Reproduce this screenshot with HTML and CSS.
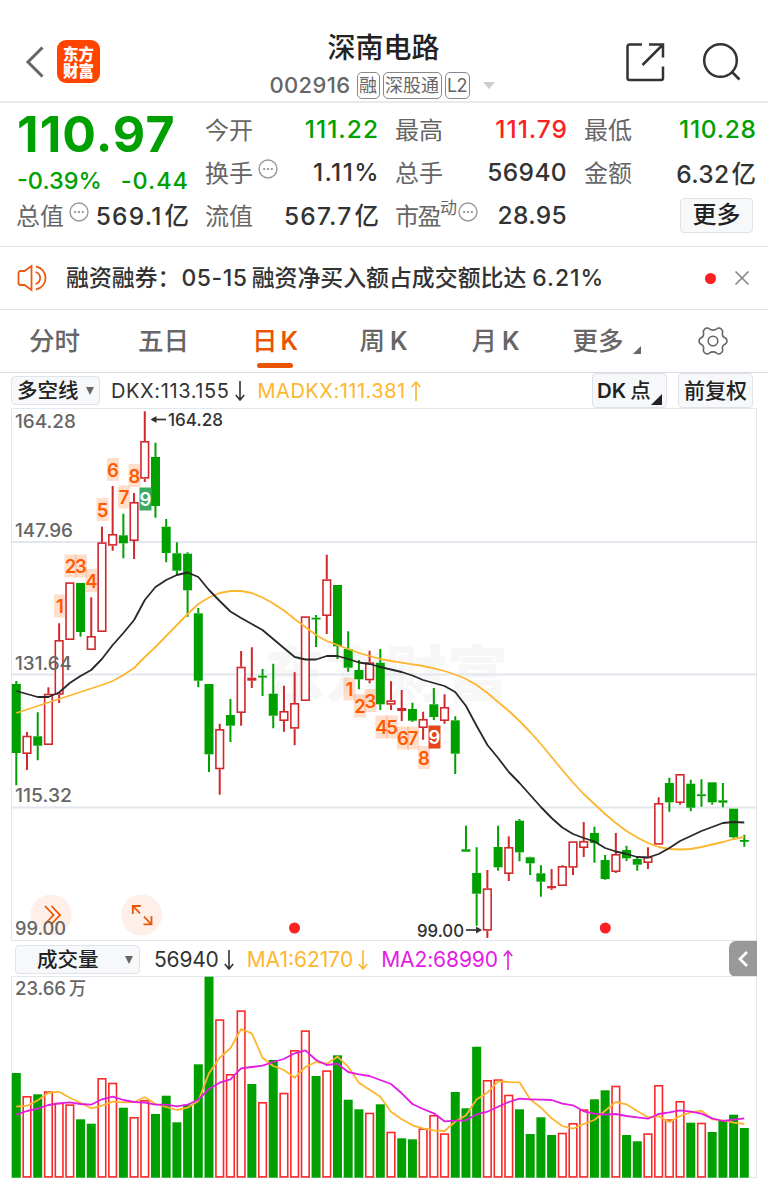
FILE: index.html
```html
<!DOCTYPE html>
<html lang="zh-CN">
<head>
<meta charset="utf-8">
<title>深南电路 002916</title>
<link rel="stylesheet" href="styles.css">
</head>
<body>
<header class="topbar">
  <div class="topbar-left">
    <svg class="back" width="22" height="34" viewBox="0 0 22 34"><path d="M19.500 2.500L5 17l14.500 14.500" fill="none" stroke="#666" stroke-width="3"/></svg>
    <div class="logo"><span>东方</span><span>财富</span></div>
  </div>
  <div class="title">
    <h1>深南电路</h1>
    <div class="subtitle"><span class="code">002916</span><span class="tag">融</span><span class="tag">深股通</span><span class="tag tag-l2">L2</span><i class="caret"></i></div>
  </div>
  <div class="topbar-right">
    <svg width="42" height="42" viewBox="0 0 42 42" fill="none" stroke="#333" stroke-width="2.500"><path d="M17 3.500H4.500a2 2 0 0 0-2 2V37a2 2 0 0 0 2 2H36a2 2 0 0 0 2-2V25.500M24 3.500H38V16.500M38 3.500L17.500 24"/></svg>
    <svg width="42" height="42" viewBox="0 0 42 42" fill="none" stroke="#333" stroke-width="2.500"><circle cx="19.500" cy="19.500" r="16.300"/><path d="M30.500 30.500L38.500 38.500"/></svg>
  </div>
</header>

<section class="quote">
  <div class="price-col">
    <div class="price">110.97</div>
    <div class="row change green"><span>-0.39%</span><span class="wide">-0.44</span></div>
    <div class="row"><label>总值<svg class="info" viewBox="0 0 20 20"><circle cx="10" cy="10" r="9"/><path d="M5.200 10h2M9 10h2M12.800 10h2"/></svg></label><b class="cap">569.1<em>亿</em></b></div>
  </div>
  <div class="cell-col">
    <div class="row"><label>今开</label><b class="green wide">111.22</b></div>
    <div class="row"><label>换手<svg class="info" viewBox="0 0 20 20"><circle cx="10" cy="10" r="9"/><path d="M5.200 10h2M9 10h2M12.800 10h2"/></svg></label><b class="wider">1.11%</b></div>
    <div class="row"><label>流值</label><b class="cap">567.7<em>亿</em></b></div>
  </div>
  <div class="cell-col">
    <div class="row"><label>最高</label><b class="red wide">111.79</b></div>
    <div class="row"><label>总手</label><b>56940</b></div>
    <div class="row"><label class="pe">市盈<sup>动</sup><svg class="info" viewBox="0 0 20 20"><circle cx="10" cy="10" r="9"/><path d="M5.200 10h2M9 10h2M12.800 10h2"/></svg></label><b>28.95</b></div>
  </div>
  <div class="cell-col">
    <div class="row"><label>最低</label><b class="green mid">110.28</b></div>
    <div class="row"><label>金额</label><b>6.32<em>亿</em></b></div>
    <div class="row row-end"><button class="more">更多</button></div>
  </div>
</section>

<section class="notice">
  <svg class="speaker" width="32" height="28" viewBox="0 0 32 28" fill="none" stroke="#eb5a14" stroke-width="1.800"><path d="M14.500 2L7.500 7H3.500a2 2 0 0 0-2 2v10a2 2 0 0 0 2 2h4l7 5z"/><path d="M18.500 8a6.200 6.200 0 0 1 0 12M19 2.500a11.700 11.700 0 0 1 0 23"/></svg>
  <p>融资融券：<span class="n1">05-15</span>融资净买入额占成交额比达<span class="n2">6.21%</span></p>
  <i class="dot"></i>
  <svg class="close" width="16" height="16" viewBox="0 0 16 16"><path d="M1.500 1.500l13 13M14.500 1.500l-13 13" stroke="#888" stroke-width="1.700"/></svg>
</section>

<nav class="tabs">
  <span class="tab">分时</span>
  <span class="tab">五日</span>
  <span class="tab active">日<i>K</i></span>
  <span class="tab">周<i>K</i></span>
  <span class="tab">月<i>K</i></span>
  <span class="tab tab-more">更多<svg width="8" height="8"><path d="M8 0v8H0z" fill="#666"/></svg></span>
  <svg class="gear" width="30" height="30" viewBox="-15 -15 30 30" fill="none" stroke="#666" stroke-width="1.600"><path d="M-6.500 -12.900Q-4.800 -13.200 -3.800 -12.200Q0 -9.600 3.800 -12.200Q4.800 -13.200 6.500 -12.900Q8.800 -12 9.500 -10.300Q9.900 -9.300 9.400 -8Q9 -4.200 12.400 -3Q14 -2 14 0Q14 2 12.400 3Q9 4.200 9.400 8Q9.900 9.300 9.500 10.300Q8.800 12 6.500 12.900Q4.800 13.200 3.800 12.200Q0 9.600 -3.800 12.200Q-4.800 13.200 -6.500 12.900Q-8.800 12 -9.500 10.300Q-9.900 9.300 -9.400 8Q-9 4.200 -12.400 3Q-14 2 -14 0Q-14 -2 -12.400 -3Q-9 -4.200 -9.400 -8Q-9.900 -9.300 -9.500 -10.300Q-8.800 -12 -6.500 -12.900Z"/><circle r="4.800"/></svg>
</nav>

<section class="indicator">
  <button class="chip chip-main">多空线<i class="tri"></i></button>
  <span class="dkx">DKX:113.155</span>
  <svg class="arr" width="10" height="20" viewBox="0 0 10 20"><path d="M5 0v19M.8 14L5 19l4.200-5" stroke="#333"/></svg>
  <span class="madkx">MADKX:111.381</span>
  <svg class="arr" width="10" height="20" viewBox="0 0 10 20"><path d="M5 20V1M.8 6L5 1l4.200 5" stroke="#fdb62f"/></svg>
  <button class="chip chip-dk"><span>DK</span>点<svg width="11" height="11"><path d="M11 0v11H0z" fill="#222"/></svg></button>
  <button class="chip chip-adj">前复权</button>
</section>

<svg id="kline" class="chart" width="768" height="533" viewBox="0 408 768 533"></svg>

<section class="volhead">
  <button class="chip chip-vol">成交量<i class="tri"></i></button>
  <span class="v0">56940</span>
  <svg class="arr" width="10" height="20" viewBox="0 0 10 20"><path d="M5 0v19M.8 14L5 19l4.200-5" stroke="#333"/></svg>
  <span class="v1">MA1:62170</span>
  <svg class="arr" width="10" height="20" viewBox="0 0 10 20"><path d="M5 0v19M.8 14L5 19l4.200-5" stroke="#fdb62f"/></svg>
  <span class="v2">MA2:68990</span>
  <svg class="arr" width="10" height="20" viewBox="0 0 10 20"><path d="M5 20V1M.8 6L5 1l4.200 5" stroke="#e31be3"/></svg>
  <button class="collapse"><svg width="12" height="18" viewBox="0 0 12 18"><path d="M10 2L3 9l7 7" fill="none" stroke="#fff" stroke-width="2.800"/></svg></button>
</section>

<svg id="volume" class="chart" width="768" height="207" viewBox="0 976 768 207"></svg>
<script src="chart.js"></script>
</body>
</html>
```
FILE: styles.css
```css
* { box-sizing: border-box; }
body { margin: 0; width: 768px; height: 1183px; overflow: hidden; background: #fff; color: #333; font-family: Inter, "Noto Sans CJK SC", sans-serif; }
button { font-family: inherit; margin: 0; padding: 0; border: 1px solid #dfe3e9; background: #f6f8fa; color: #222; border-radius: 4px; }
i, em { font-style: normal; }
svg { display: block; flex: none; }
.green { color: #00a000 !important; }
.red { color: #fb2021 !important; }

.topbar { height: 103px; border-bottom: 2px solid #ebebeb; display: grid; grid-template-columns: 200px 368px 200px; }
.topbar-left { display: flex; align-items: center; padding: 22px 0 0 23px; gap: 12px; }
.logo { width: 43px; height: 43px; border-radius: 9px; background: #ff4400; color: #fff; display: flex; flex-direction: column; align-items: center; justify-content: center; font-weight: 900; font-size: 15.500px; line-height: 17px; font-family: "Noto Sans CJK SC", sans-serif; }
.topbar-right { display: flex; justify-content: flex-end; align-items: center; gap: 34px; padding: 22px 25px 0 0; }
.title { display: flex; flex-direction: column; align-items: center; padding-top: 28px; }
h1 { margin: 0 0 0 -1px; font-size: 28px; line-height: 41px; font-weight: 500; color: #222; }
.subtitle { display: flex; align-items: center; height: 32px; color: #666; margin-left: -4px; }
.code { font-size: 22px; font-weight: 500; letter-spacing: .35px; margin-right: 6px; width: 81px; }
.tag { border: 1.500px solid #888; border-radius: 5px; height: 27px; line-height: 25px; font-size: 18px; padding: 0 1.500px; margin-right: 3px; white-space: nowrap; }
.tag-l2 { width: 25px; padding: 0; text-align: center; letter-spacing: -.5px; }
.caret { border: 6px solid transparent; border-top: 7px solid #ccc; border-bottom: 0; margin-left: 10px; }

.quote { height: 144px; border-bottom: 1px solid #e3e3e3; display: grid; grid-template-columns: 171px 172px 171px 171px; column-gap: 18px; padding: 4.500px 0 0 17px; }
.row { height: 43px; display: flex; align-items: center; justify-content: space-between; white-space: nowrap; }
.row label { color: #666; font-size: 24px; display: flex; align-items: center; margin: -2px 0 0 -1px; }
.row b { font-weight: 500; font-size: 24.500px; letter-spacing: .35px; }
.row em { margin-left: 2px; letter-spacing: 0; }
.row .mid { letter-spacing: .7px; margin-right: -.7px; }
.row .wide { letter-spacing: 1px; margin-right: -1px; }
.row .wider { letter-spacing: 1.400px; margin-right: -2px; }
.row .cap { letter-spacing: 1.200px; margin: -2px -1px 0 0; }
.info { width: 20px; height: 20px; margin: -5px 0 0 5px; fill: none; stroke: #999; stroke-width: 1.400; }
.info path { stroke-width: 2; }
.price-col { display: flex; flex-direction: column; }
.price { height: 51px; line-height: 52px; font-size: 50px; font-weight: 750; color: #00a000; letter-spacing: 1.100px; }
.price-col .change { height: 37px; padding-top: 7px; font-size: 23.500px; font-weight: 500; }
.price-col .row:last-child { height: 39px; }
.pe { letter-spacing: -1.500px; }
.pe sup { font-size: 17px; margin-top: -15px; }
.pe .info { margin-left: 2px; }
.row-end { justify-content: flex-end; }
.more { width: 73px; height: 35px; line-height: 32px; font-size: 24px; font-weight: 500; margin-right: 3px; }

.notice { height: 63px; border-bottom: 1px solid #e3e3e3; display: flex; align-items: center; padding: 0 18px 0 17px; }
.notice p { margin: 0 auto 0 17px; font-size: 22.900px; font-weight: 500; line-height: 30px; white-space: nowrap; }
.n1 { margin: 0 4px 0 1px; letter-spacing: .6px; }
.n2 { margin-left: 6px; letter-spacing: 1px; }
.dot { width: 11px; height: 11px; border-radius: 50%; background: #fb2021; margin-right: 18px; }

.tabs { height: 63px; border-bottom: 1px solid #d7dbe5; display: grid; grid-template-columns: 109px 114px 107.500px 112px 101px 1fr 30px; align-items: center; font-size: 25.500px; font-weight: 500; color: #666; padding: 0 40px 0 29px; }
.tab { height: 62px; line-height: 62px; display: flex; white-space: nowrap; }
.tab i { margin-left: 5px; font-weight: 600; font-size: 25px; }
.tab.active { color: #ea5504; position: relative; }
.tab.active::after { content: ""; position: absolute; left: 5px; bottom: 4px; width: 36px; height: 5px; border-radius: 3px; background: #ea5504; }
.tab.active i { margin-left: 3px; }
.tab-more svg { margin: 36px 0 0 9px; }

.indicator { height: 35px; display: flex; align-items: center; padding: 0 15px 0 11px; font-size: 20px; white-space: nowrap; }
.chip { height: 29px; display: flex; align-items: center; font-size: 20.500px; font-weight: 500; line-height: 26px; }
.chip-main { width: 89px; padding-left: 5px; }
.tri { border: 4.500px solid transparent; border-top: 8px solid #666; border-bottom: 0; margin-left: 7px; }
.dkx { margin-left: 11px; color: #333; letter-spacing: .6px; }
.madkx { color: #fdb62f; margin-left: 13px; letter-spacing: .5px; }
.arr { margin-left: 5px; fill: none; stroke-width: 1.600; }
.chip-dk { width: 75px; height: 35px; margin-left: auto; padding-left: 4px; }
.chip-dk span { margin-right: 4px; font-weight: 600; }
.chip-dk svg { align-self: flex-end; margin-bottom: 2px; }
.chip-adj { width: 75px; height: 35px; margin-left: 11px; padding-left: 5px; font-size: 21px; }

.volhead { height: 35px; display: flex; align-items: center; padding: 2px 11px 0 15px; font-size: 21px; white-space: nowrap; }
.chip-vol { width: 125px; padding-left: 21px; }
.chip-vol .tri { margin-left: 26px; }
.v0 { margin-left: 14px; letter-spacing: -.2px; }
.v1 { margin-left: 13px; color: #fdb62f; }
.v2 { margin-left: 13px; color: #e31be3; letter-spacing: -.1px; }
.collapse { margin: -1px 0 0 auto; width: 28px; height: 36px; border: 0; background: #999; border-radius: 7px 0 0 7px; display: flex; align-items: center; justify-content: center; }

.chart text { font-family: Inter, "Noto Sans CJK SC", sans-serif; }
.frame { fill: none; stroke: #e2e6ed; stroke-width: 1; }
.gridline { stroke: #e2e6ed; stroke-width: 2; }
.axis { font-size: 18px; font-weight: 500; fill: #666; }
.mark { font-size: 17.500px; font-weight: 500; fill: #333; }
.watermark { font-size: 61px; font-weight: 900; fill: #f7f7f7; }
.seq { font-size: 18.500px; font-weight: 600; text-anchor: middle; }
.line { fill: none; stroke-width: 1.800; stroke-linejoin: round; }
```
FILE: chart.js
```javascript
const X0 = 16.3, STEP = 10.706, GREEN = '#00a000';
const x = i => X0 + i * STEP;

// Candles: direction, high, body top, body bottom, low (f = flat rise, drawn solid)
const candles = `g 681 684 753 785.3|r 732 735.7 754 770|g 712.3 736.3 745.7 760.3|r 687.3 693.7 745 745|r 623.3 640 694.7 703|r 582.3 582.3 640 640|g 583 583 632 636.7|r 597.3 636 650 650|r 526.7 542.3 632 632|r 486 534 545.7 550.7|g 513.7 535.3 543.3 558.3|r 493 502 541 559|r 411.3 441 478.7 482|g 442.7 457 506 517.7|g 519 526.7 553 562.3|g 542.3 553.3 570.7 574.7|g 552.3 553.7 590.3 616.7|g 608 613.3 680.7 687.3|g 684 684 754.3 772|r 723.7 729 769.3 794.7|g 699 715 725.7 742|r 651 666.7 713 725.7|f 647.3 677.7 680.7 688|g 669 675.7 677 696|g 663.7 693.7 715.7 728.3|r 685.7 711 721 731.7|r 672.3 703 728.7 745.3|r 616.3 616.3 701 701|g 615 617.7 619.3 647|r 554.7 579.3 616 634|g 585 585 646.3 659|g 631.3 649 667.7 671.7|g 660 670 679.3 689.3|r 650.7 662.3 680.3 683.3|g 649 662.7 704.3 710|r 681.3 700.3 704.7 710|f 690 708 711 721|g 702.7 709 720.7 722|r 711.7 719 728 739.7|g 688 704.3 717 720|r 694.3 707 721 723.7|g 716.3 720.3 753.7 774|g 825.7 849.3 851.7 851.7|g 847.3 873 893.7 925.7|r 870 888.3 930.7 938|g 825.7 847 867.3 870.7|r 836.3 847 874 881|g 819 820.7 852.3 861.3|g 856.7 857.3 863.3 875|g 865.3 873.3 881.7 896.7|f 869 886 888.3 890|r 865.3 866 886 886|r 841.3 841.3 867.7 875|r 822 841 848 857|g 826.7 833 843 862.7|g 855 860 879 879.7|r 833 854 872 873|g 845.7 850 858.3 861|g 856 859 864.7 870.7|r 847.3 856.7 863 869|r 797.3 803 844.7 844.7|g 777.7 783 802.3 811.7|r 774 774 803 804.7|g 779.7 783.7 807.7 811.3|g 779.3 794.3 795.7 806.7|g 782.3 782.3 802.3 804.7|g 783 800.3 802.7 807.3|g 808.7 808.7 837.3 839|g 834.7 840 841.3 846.7`
  .split('|').map(s => s.split(' '));

const dkx = [691,694,697,697,692.5,683,676,670,659,645,633,620,600,587,580,575,572.5,577,590,601,611.5,618,624,630,639,648,657,659.5,659.5,656,656,659,662.5,664,667,669.5,672,675.5,680,683,686,692,706,726,745,758,772,783,795,807,818,827.5,834,838,841.5,848,851.5,854,857,857.5,854,848,841,836,831,827,823,822,822.5];
const madkx = [713,709.5,706,702.5,699,695.5,692,688.5,685,681,675,668,657,647,636,625,614,604,597.5,593,591,591,593,597.5,603.5,610.5,619,627,635,641,645,649,653,656,659,661,662.7,664.3,666,668.3,671,674.5,679,685,693,702,711,721,732,744,757,770,782.5,794,804,814,823,831,837.5,843,847,849,849.5,849,847,844.5,842,839,837];

const volumes = 'g1073 r1096 g1094.3 r1091.3 r1102.7 r1104.3 g1119.3 g1123.7 r1078 r1082.7 g1107.7 r1117 r1100 g1114 g1095.7 g1122.3 g1104.7 g1064.3 g976.7 r1019.3 r1074 r1010.3 g1084 r1102 g1060 r1092.7 r1050 r1030.3 g1076 r1070.3 g1055.3 g1099.7 g1109.3 r1112.7 g1104.3 r1131.7 g1138.3 g1139.3 r1128.3 r1115 r1133.3 g1092 g1108.3 g1046.7 r1080 r1079.3 r1094.7 g1109.3 g1134 g1117.3 g1135 r1132.7 r1123 r1109.3 g1099.3 g1090.3 r1085.7 g1135 g1141.3 r1133.3 r1085 r1119.3 r1101 g1122.7 r1122.7 g1132 g1120.7 g1114.7 g1128'.split(' ');
const ma1 = [530,527,511,489,485,503,518,535,527,515,517,516,502,522,531,540,533,513,430,383,355,297,310,383,408,420,443,411,396,401,380,410,458,479,500,545,568,586,595,601,603,575,556,508,488,454,456,457,508,533,565,588,596,582,570,542,516,523,543,562,558,577,558,547,542,568,571,578,582];
const ma2 = [554,543,536,525,520,517,522,524,508,500,510,516,518,524,524,529,524,509,477,458,448,415,411,407,396,387,370,361,390,405,401,426,433,438,450,462,490,522,537,550,574,572,571,553,545,530,516,506,508,509,510,521,526,544,551,554,552,558,562,566,552,547,541,545,551,565,573,569,565];

const line = (ys, color) => `<polyline class="line" stroke="${color}" points="${ys.map((y, i) => x(i).toFixed(1) + ',' + y).join(' ')}"/>`;
const rect = (X, Y, w, h, attrs) => `<rect x="${X}" y="${Y}" width="${w}" height="${h}" ${attrs}/>`;
const text = (X, Y, w, cls, s) => `<text x="${X}" y="${Y}" textLength="${w}" lengthAdjust="spacingAndGlyphs" class="${cls}">${s}</text>`;

let k = text(264, 697, 244, 'watermark', '东方财富');
k += '<path class="gridline" d="M12 542H756M12 674.500H756M12 807.500H756"/>';
k += '<path class="frame" d="M11.500 941V408.500H756.500V941M11.500 940.500H756.500"/>';
candles.forEach(([dir, ...v], i) => {
  const [hi, top, bot, lo] = v.map(Number), cx = x(i), c = dir === 'g' ? GREEN : '#d0282d';
  k += `<path d="M${cx} ${hi}V${top}M${cx} ${bot}V${lo}" stroke="${c}" stroke-width="2"/>`;
  k += dir === 'r'
    ? rect(cx - 3.8, top + .8, 7.6, bot - top - 1.6, `fill="#fff" stroke="${c}" stroke-width="1.6"`)
    : rect(cx - 4.5, top, 9, Math.max(bot - top, 1.8), `fill="${c}"`);
});
k += line(madkx, '#fdb62f') + line(dkx, '#282828');

const seq = [[1,60,606],[2,70.5,566],[3,81,566],[4,91.5,580.5],[5,102.5,509.5],[6,113,469.5],[7,124,497],[8,134.5,475.5],[9,145.5,499,'#3aaa60'],
  [1,349.5,689],[2,360,706],[3,370.5,700.5],[4,381.5,727],[5,392,727],[6,403,738],[7,413,738],[8,424,757.5],[9,434.5,737,'#e2461a']];
seq.forEach(([n, cx, cy, bg]) => {
  k += rect(cx - 6, cy - 11.5, 12, 23, bg ? `fill="${bg}"` : 'fill="#ff5a00" fill-opacity=".2"');
  k += `<text class="seq" x="${cx}" y="${cy + 7}" fill="${bg ? '#fff' : '#ff5a00'}">${n}</text>`;
});

k += '<circle cx="51" cy="915" r="20.500" fill="#fef0e9"/><path d="M45 906l8.500 9-8.500 9M51.500 906l8.500 9-8.500 9" fill="none" stroke="#ea5504" stroke-width="1.800"/>';
k += '<circle cx="141.500" cy="915" r="20.500" fill="#fef0e9"/><path d="M132.800 914v-8h8M133 906l7 7.300M143.500 924.300h8v-8M151 924l-7-7.300" fill="none" stroke="#ea5504" stroke-width="1.800"/>';
k += text(15, 428, 61, 'axis', '164.28') + text(15, 536.5, 58, 'axis', '147.96') + text(15, 669.5, 57, 'axis', '131.64') + text(15, 802, 57, 'axis', '115.32') + text(15, 935, 51, 'axis', '99.00');
k += text(168, 426, 55, 'mark', '164.28') + '<path d="M152 419.500H166" stroke="#333" stroke-width="1.700"/><path d="M150.500 419.500l6-3.500v7z" fill="#333"/>';
k += text(417, 936.5, 47, 'mark', '99.00') + '<path d="M466 930H480" stroke="#333" stroke-width="1.700"/><path d="M482 930l-6-3.500v7z" fill="#333"/>';
k += '<circle cx="294.500" cy="928" r="5.500" fill="#fb2021"/><circle cx="605.300" cy="928" r="5.500" fill="#fb2021"/>';
document.getElementById('kline').innerHTML = k;

let v = '<path class="frame" d="M11.500 1178V976.500H756.500V1178M11.500 1177.500H756.500"/>';
volumes.forEach((s, i) => {
  const top = +s.slice(1), cx = x(i), h = 1177.7 - top;
  v += s[0] === 'g' ? rect(cx - 4.5, top, 9, h, `fill="${GREEN}"`)
    : rect(cx - 3.8, top + .8, 7.6, h - 1.6, 'fill="#fff" stroke="#fb2828" stroke-width="1.600"');
});
v += line(ma1.map(y => (930 + y / 3).toFixed(1)), '#fdb62f') + line(ma2.map(y => (930 + y / 3).toFixed(1)), '#e31be3');
v += text(15, 994.5, 51, 'axis', '23.66') + text(69, 994.5, 17, 'axis', '万');
document.getElementById('volume').innerHTML = v;
```
